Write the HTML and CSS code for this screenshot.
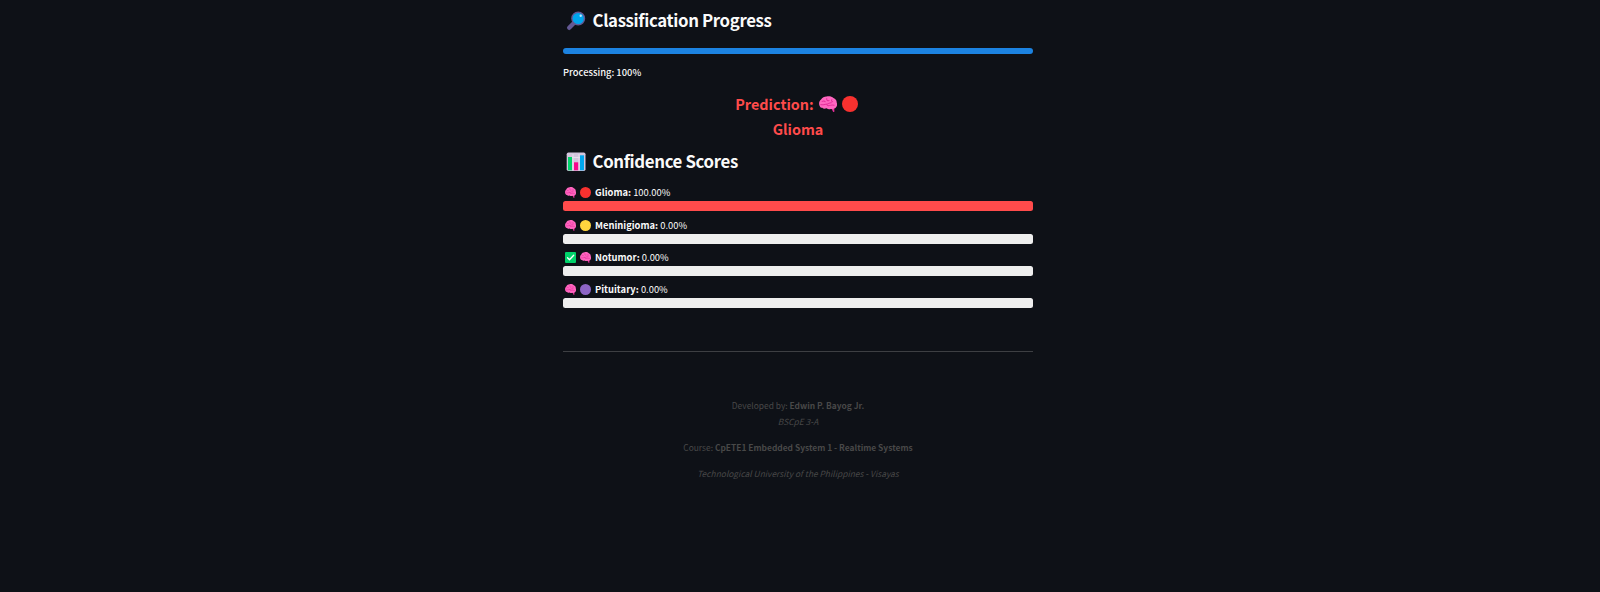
FILE: index.html
```html
<!DOCTYPE html>
<html lang="en">
<head>
<meta charset="utf-8">
<title>Classification Progress</title>
<link rel="stylesheet" href="styles.css">
</head>
<body>
<svg class="sprite" aria-hidden="true">
  <symbol id="brain" viewBox="0 0 17.4 16" preserveAspectRatio="none">
    <path d="M11 11.500 14.700 11.500l.2 4.300-1.200.2-1.200-2.600z" fill="#e62f9b"/>
    <path d="M.8 10.200C-.5 8 0 4.800 2 3.500 3 1.500 5.500.3 7.300.4 9.500-.2 12.500.2 14 1.900c2 .7 3.200 2.400 3.100 4.500.8 2.100.4 4.500-1.200 5.500-1.500 1-3.200 1.500-4.500 1-1.700.7-3 .3-3.900-.6-1.900.7-3.500.7-4.300-.6-1 .1-2-.4-2.400-1.500z" fill="#ff66c0"/>
    <path d="M3 5.500c1-.9 2.300-.7 3 .2M7.500 2.500c-.5 1.500.8 2.500 2.200 2M12.500 3.500c-.8.9-.4 2 .7 2.300M1.800 8.500c2.200.9 3.800-.5 5.700-.5s2.300-1.500 4.500-1.200M7.500 8c.2 1.500 1.600 2 3 1.400s2.500-.7 4.200-.2" fill="none" stroke="#e62f9b" stroke-width="1" stroke-linecap="round"/>
  </symbol>
  <symbol id="dot" viewBox="0 0 16 16"><circle cx="8" cy="8" r="8" fill="currentColor"/></symbol>
  <symbol id="check" viewBox="0 0 11 11">
    <rect width="11" height="11" rx="1" fill="#00d26a"/>
    <path d="M2.500 5.700 4.500 7.800 8.700 3.300" fill="none" stroke="#fff" stroke-width="1.300" stroke-linecap="round" stroke-linejoin="round"/>
  </symbol>
  <symbol id="lens" viewBox="0 0 20 20">
    <path d="M3.200 16.800 7.200 12.800" stroke="#635994" stroke-width="4.400" stroke-linecap="round"/>
    <circle cx="12.200" cy="7.500" r="6.300" fill="#00a6ed" stroke="#635994" stroke-width="1.400"/>
    <circle cx="14.700" cy="4.700" r="1.200" fill="#b9e8ff"/>
  </symbol>
  <symbol id="chart" viewBox="0 0 20 20">
    <rect x=".7" y=".5" width="18.800" height="18.500" rx="1.700" fill="#d3c5dd"/>
    <path d="M2 5.500h16M7 2v16M13 2v16" stroke="#e8e0ef"/>
    <path d="M2 5h4v13.300H2z" fill="#00d26a"/>
    <path d="M8 10.300h4.200v8H8z" fill="#f70a8d"/>
    <path d="M14 3.300h4v15h-4z" fill="#00a6ed"/>
  </symbol>
</svg>
<main class="page">
  <h2 class="heading"><svg class="heading-icon"><use href="#lens"/></svg><span>Classification Progress</span></h2>
  <div class="progress"></div>
  <p class="status">Processing: 100%</p>
  <div class="prediction">
    <div class="prediction-line"><span>Prediction:</span><svg class="brain-lg"><use href="#brain"/></svg><svg class="dot-lg red"><use href="#dot"/></svg></div>
    <div class="prediction-line"><span>Glioma</span></div>
  </div>
  <h2 class="heading"><svg class="heading-icon"><use href="#chart"/></svg><span>Confidence Scores</span></h2>
  <section class="scores">
    <div class="score">
      <p class="label"><svg class="icon"><use href="#brain"/></svg><svg class="icon"><use class="red" href="#dot"/></svg><span><b>Glioma:</b> 100.00%</span></p>
      <div class="bar"><div class="fill" style="width:100%"></div></div>
    </div>
    <div class="score">
      <p class="label"><svg class="icon"><use href="#brain"/></svg><svg class="icon"><use class="yellow" href="#dot"/></svg><span><b>Meninigioma:</b> 0.00%</span></p>
      <div class="bar"><div class="fill" style="width:0%"></div></div>
    </div>
    <div class="score">
      <p class="label"><svg class="icon"><use href="#check"/></svg><svg class="icon"><use href="#brain"/></svg><span><b>Notumor:</b> 0.00%</span></p>
      <div class="bar"><div class="fill" style="width:0%"></div></div>
    </div>
    <div class="score">
      <p class="label"><svg class="icon"><use href="#brain"/></svg><svg class="icon"><use class="purple" href="#dot"/></svg><span><b>Pituitary:</b> 0.00%</span></p>
      <div class="bar"><div class="fill" style="width:0%"></div></div>
    </div>
  </section>
  <hr class="divider">
  <footer class="footer">
    <p>Developed by: <b>Edwin P. Bayog Jr.</b><br><i>BSCpE 3-A</i></p>
    <p>Course: <b>CpETE1 Embedded System 1 - Realtime Systems</b></p>
    <p><i>Technological University of the Philippines - Visayas</i></p>
  </footer>
</main>
</body>
</html>
```
FILE: styles.css
```css
* { box-sizing: border-box; }
body {
  margin: 0;
  min-height: 592px;
  background: #0e1117;
  color: #fafafa;
  font-family: "Noto Sans CJK SC", "Noto Sans", sans-serif;
}
p, h2 { margin: 0; }
.sprite { position: absolute; width: 0; height: 0; }
.page { width: 470px; margin-left: 563px; padding-top: 7px; }
.heading {
  display: flex;
  align-items: center;
  gap: 6.5px;
  height: 24px;
  padding-left: 3px;
  font-size: 16.8px;
  font-weight: 600;
  letter-spacing: -0.35px;
  line-height: 24px;
}
.heading span { padding-top: 1px; }
.heading-icon { width: 20px; height: 20px; margin-top: 4px; }
.progress { height: 6px; margin-top: 17px; border-radius: 3px; background: #1c83e1; }
.status { height: 16px; margin-top: 10px; font-size: 9.4px; font-weight: 500; line-height: 16px; }
.prediction {
  margin: 10px 0 8px;
  color: #ff4b4b;
  font-size: 14.4px;
  font-weight: 700;
  line-height: 25px;
}
.prediction-line { display: flex; justify-content: center; align-items: center; height: 25px; }
.prediction-line span { padding-top: 1px; }
.brain-lg { width: 18px; height: 16px; margin: 3px 5px 0 5px; }
.dot-lg { width: 16px; height: 16px; margin: 3px 3px 0 0; }
.scores { margin-top: 11px; }
.score { margin-bottom: 4px; }
.score:first-child { margin-bottom: 5px; }
.label {
  display: flex;
  align-items: center;
  height: 17px;
  margin-bottom: 1px;
  padding-left: 2px;
  font-size: 9.4px;
  line-height: 17px;
}
.label span { padding-top: 1px; }
.icon { width: 11px; height: 11px; margin: 1px 4px 0 0; }
.red { color: #f8312f; }
.yellow { color: #ffd53e; }
.purple { color: #8d65c5; }
.bar { height: 10px; border-radius: 2.5px; background: #eee; overflow: hidden; }
.fill { height: 100%; background: #ff4b4b; }
.divider { height: 1px; margin: 43px 0 45px; border: 0; background: #3d3f43; }
.footer { color: #484848; font-size: 8.42px; line-height: 16px; text-align: center; }
.footer p { margin-bottom: 10px; }
```
